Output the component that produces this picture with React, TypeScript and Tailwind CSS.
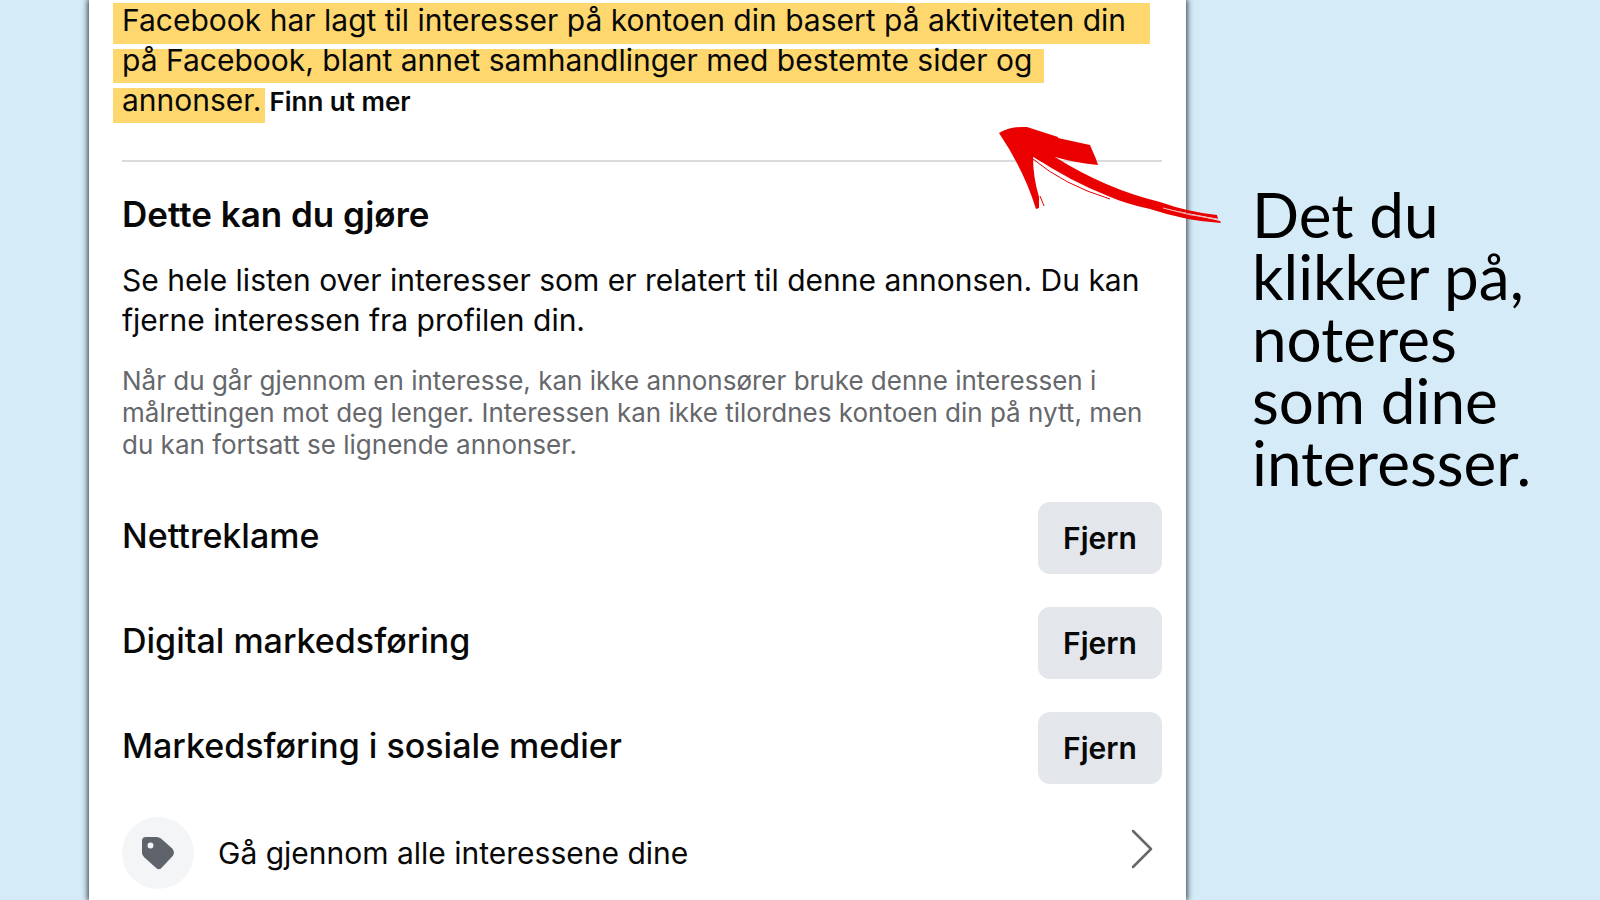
import React from 'react';

const highlightedLines = [
  {
    text: 'Facebook har lagt til interesser på kontoen din basert på aktiviteten din',
    className: 'h-[41px] pr-6 leading-[34px]',
  },
  {
    text: 'på Facebook, blant annet samhandlinger med bestemte sider og',
    className: 'h-[34px] pr-3 leading-[22px]',
  },
];

const interests = ['Nettreklame', 'Digital markedsføring', 'Markedsføring i sosiale medier'];

const TagIcon: React.FC = () => (
  <svg viewBox="0 0 34 34" className="h-[34px] w-[34px]" fill="#5f636c" aria-hidden="true">
    <path
      fillRule="evenodd"
      d="M5 1H15.5Q18 1 20 2.6L31 12.2Q34 15.2 32.4 18.8Q32 19.8 31 20.8L20.4 32Q17.8 34.4 15.2 32L3.4 21.4Q1 19.4 1 17V5Q1 1 5 1ZM9.5 6.6A3 3 0 1 0 9.5 12.6A3 3 0 1 0 9.5 6.6Z"
    />
  </svg>
);

const ChevronIcon: React.FC = () => (
  <svg viewBox="0 0 24 40" className="h-10 w-6" fill="none" aria-hidden="true">
    <path d="M3 2L21 20L3 38" stroke="#65676b" strokeWidth="2.5" strokeLinecap="round" strokeLinejoin="round" />
  </svg>
);

const Arrow: React.FC = () => (
  <svg
    viewBox="0 0 226 100"
    className="absolute top-[125px] -left-[188px] h-[100px] w-[226px]"
    fill="#ea0000"
    aria-hidden="true"
  >
    {/* Pilspiss */}
    <path d="M1 8Q12 1 29 2L60 12V13L92 20L98 34L100 40Q78 38 57 32L46 38L35 32Q35 52 41 72V83L38 84Q26 45 1 8Z" />
    {/* Penselstrøk */}
    <path d="M36 30L57 32Q108 64 162 77Q190 87 219 90L220 94L164 83L222 96L223 98Q188 96 152 84Q128 79 110 71Q72 56 36 32Z" />
    <path d="M35 34Q66 60 112 74" fill="none" stroke="#ea0000" strokeWidth="1" />
    <path d="M36 33Q68 58 108 71" fill="none" stroke="#fff" strokeWidth="1" />
    <path d="M42 71L46 81" fill="none" stroke="#ea0000" strokeWidth="1" />
    <path d="M165 83Q192 91 219 94" fill="none" stroke="#f7b9b9" strokeWidth="1" />
  </svg>
);

const App: React.FC = () => {
  return (
    <div className="flex min-h-screen overflow-hidden bg-[#d5ebf8] pl-[89px] font-['Inter',sans-serif] text-[30px] leading-10 text-[#080809]">
      <main className="min-w-0 flex-1 bg-white pt-[3px] pr-6 pb-2 pl-[33px] shadow-[0_0_6px_1px_#24313a]">
        {/* Forklaring */}
        <div className="-ml-[9px] flex flex-col items-start gap-[5px] whitespace-nowrap">
          {highlightedLines.map((line) => (
            <mark key={line.text} className={`bg-[#fed86f] pl-[9px] text-inherit ${line.className}`}>
              {line.text}
            </mark>
          ))}
          <p className="flex items-baseline gap-1 leading-6">
            <mark className="h-[35px] bg-[#fed86f] pr-1 pl-[9px] text-inherit">annonser.</mark>
            <a href="#" className="text-[26px] font-semibold">Finn ut mer</a>
          </p>
        </div>

        <hr className="mt-[37px] border-t-2 border-[#dadbdd]" />

        <h2 className="mt-8 text-[35px] font-semibold">Dette kan du gjøre</h2>
        <p className="mt-[26px]">
          Se hele listen over interesser som er relatert til denne annonsen. Du kan
          <br />
          fjerne interessen fra profilen din.
        </p>
        <p className="mt-[25px] text-[26px] leading-8 text-[#65676b]">
          Når du går gjennom en interesse, kan ikke annonsører bruke denne interessen i
          <br />
          målrettingen mot deg lenger. Interessen kan ikke tilordnes kontoen din på nytt, men
          <br />
          du kan fortsatt se lignende annonser.
        </p>

        {/* Interesser */}
        <ul className="mt-[41px] flex flex-col gap-[33px]">
          {interests.map((interest) => (
            <li key={interest} className="flex items-center justify-between">
              <span className="pb-1 text-[34px] font-medium">{interest}</span>
              <button
                type="button"
                aria-label={`Fjern ${interest}`}
                className="h-[72px] w-[124px] rounded-xl bg-[#e3e6ea] font-semibold"
              >
                Fjern
              </button>
            </li>
          ))}
          <li>
            <a href="#" className="flex items-center">
              <span className="flex h-[72px] w-[72px] items-center justify-center rounded-full bg-[#f4f5f7]">
                <TagIcon />
              </span>
              <span className="ml-6 flex-1">Gå gjennom alle interessene dine</span>
              <span className="mr-2 pb-2">
                <ChevronIcon />
              </span>
            </a>
          </li>
        </ul>
      </main>

      <aside className="relative w-[414px] shrink-0 pt-[183px] pl-[66px]">
        <Arrow />
        <p className="font-['Lato',sans-serif] text-[62px] leading-[62px] text-black">
          Det du
          <br />
          klikker på,
          <br />
          noteres
          <br />
          som dine
          <br />
          interesser.
        </p>
      </aside>
    </div>
  );
};

export default App;
